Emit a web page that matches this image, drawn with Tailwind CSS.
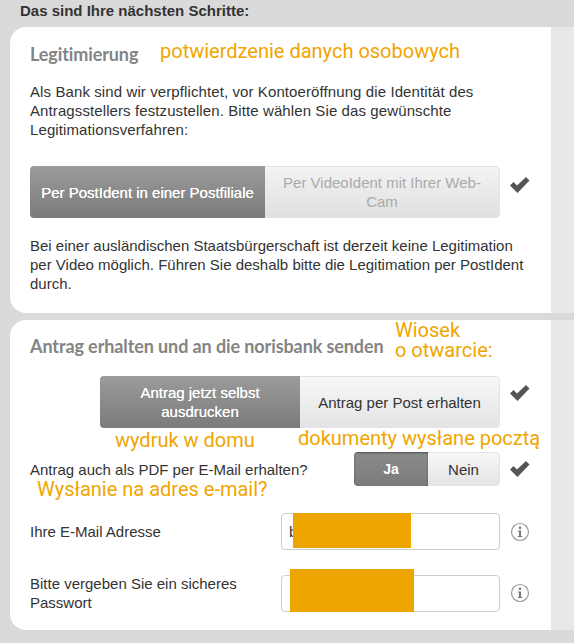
<!DOCTYPE html>
<html lang="de">
<head>
<meta charset="UTF-8">
<title>Das sind Ihre nächsten Schritte</title>
<script src="https://cdn.jsdelivr.net/npm/@tailwindcss/browser@4"></script>
</head>
<body class="bg-[#dadada] font-['Liberation_Sans',Arial,sans-serif] text-[15px] leading-[19px] text-[#333]">
<div class="relative w-[574px] h-[643px] overflow-hidden">
  <h2 class="pl-[20px] pt-[1px] h-[27px] text-[15px] leading-[19px] font-bold text-[#333]">Das sind Ihre nächsten Schritte:</h2>

  <!-- Legitimierung -->
  <section class="flex ml-[10px] h-[286px]">
    <div class="w-[541px] bg-white rounded-l-[16px] pl-[20px] pt-[16px]">
      <h3 class="h-[22px] text-[18px] leading-[22px] tracking-[-0.1px] font-bold font-['Lato',sans-serif] text-[#848484]">Legitimierung</h3>
      <p class="mt-[17px] w-[470px] tracking-[0.1px]">Als Bank sind wir verpflichtet, vor Kontoeröffnung die Identität des Antragsstellers festzustellen. Bitte wählen Sie das gewünschte Legitimationsverfahren:</p>
      <div class="flex items-center mt-[27px]">
        <div class="flex w-[470px] h-[52px] rounded-[4px] overflow-hidden">
          <div class="w-[235px] flex items-center justify-center text-center text-[15px] text-white bg-gradient-to-b from-[#9b9b9b] to-[#7b7b7b] [text-shadow:0_0_0.5px_#fff]">Per PostIdent in einer Postfiliale</div>
          <div class="flex-1 flex items-center justify-center text-center px-[16px] text-[#aaa] bg-gradient-to-b from-[#f3f3f3] to-[#e0e0e0] border border-l-0 border-[#e4e4e4] rounded-r-[4px]">Per VideoIdent mit Ihrer Web-Cam</div>
        </div>
        <svg class="ml-[9px] mb-[14px]" width="22" height="18" viewBox="0 0 22 18"><path d="M1 9.5 L4.5 6 L8 9.5 L17 1 L20.5 4.5 L8.5 17 Z" fill="#555"/></svg>
      </div>
      <p class="mt-[18px] w-[500px]">Bei einer ausländischen Staatsbürgerschaft ist derzeit keine Legitimation per Video möglich. Führen Sie deshalb bitte die Legitimation per PostIdent durch.</p>
    </div>
    <div class="w-[23px] bg-[#e8e8e8]"></div>
  </section>

  <!-- Antrag -->
  <section class="flex ml-[10px] mt-[7px] h-[310px]">
    <div class="w-[541px] bg-white rounded-l-[16px] pl-[20px] pt-[15px]">
      <h3 class="h-[22px] text-[18px] leading-[22px] tracking-[-0.1px] font-bold font-['Lato',sans-serif] text-[#848484]">Antrag erhalten und an die norisbank senden</h3>
      <div class="flex items-center mt-[19px] ml-[70px]">
        <div class="flex w-[400px] h-[52px] rounded-[4px] overflow-hidden">
          <div class="w-[200px] flex items-center justify-center text-center px-[30px] text-[15px] text-white bg-gradient-to-b from-[#9b9b9b] to-[#7b7b7b] [text-shadow:0_0_0.5px_#fff]">Antrag jetzt selbst ausdrucken</div>
          <div class="flex-1 flex items-center justify-center text-center text-[#333] bg-gradient-to-b from-[#f7f7f7] to-[#e4e4e4] border border-l-0 border-[#e4e4e4] rounded-r-[4px]">Antrag per Post erhalten</div>
        </div>
        <svg class="ml-[9px] mb-[18px]" width="22" height="18" viewBox="0 0 22 18"><path d="M1 9.5 L4.5 6 L8 9.5 L17 1 L20.5 4.5 L8.5 17 Z" fill="#555"/></svg>
      </div>
      <div class="flex items-center mt-[24px]">
        <span class="w-[324px]">Antrag auch als PDF per E-Mail erhalten?</span>
        <div class="flex w-[146px] h-[34px] rounded-[4px] overflow-hidden">
          <div class="w-[74px] flex items-center justify-center font-bold text-[14px] text-white bg-gradient-to-b from-[#8b8b8b] to-[#7b7b7b] shadow-[inset_0_1px_2px_rgba(0,0,0,0.45)]">Ja</div>
          <div class="flex-1 flex items-center justify-center text-[#333] bg-gradient-to-b from-[#f7f7f7] to-[#e4e4e4] border border-l-0 border-[#e4e4e4] rounded-r-[4px]">Nein</div>
        </div>
        <svg class="ml-[9px]" width="22" height="18" viewBox="0 0 22 18"><path d="M1 9.5 L4.5 6 L8 9.5 L17 1 L20.5 4.5 L8.5 17 Z" fill="#555"/></svg>
      </div>
      <div class="flex items-center mt-[27px]">
        <span class="w-[251px]">Ihre E-Mail Adresse</span>
        <div class="w-[219px] h-[37px] border border-[#ccc] rounded-[4px] bg-white pl-[7px] leading-[35px]">b</div>
        <svg class="ml-[10px]" width="20" height="20" viewBox="0 0 20 20"><circle cx="10" cy="10" r="8.5" fill="none" stroke="#999" stroke-width="1.2"/><circle cx="10" cy="5.8" r="1.3" fill="#777"/><path d="M8 8.5 H11 V14 H12.2 V15 H7.8 V14 H9 V9.5 H8 Z" fill="#777"/></svg>
      </div>
      <div class="flex items-center mt-[24px]">
        <span class="w-[251px] pr-[20px]">Bitte vergeben Sie ein sicheres Passwort</span>
        <div class="w-[219px] h-[37px] border border-[#ccc] rounded-[4px] bg-white"></div>
        <svg class="ml-[10px]" width="20" height="20" viewBox="0 0 20 20"><circle cx="10" cy="10" r="8.5" fill="none" stroke="#999" stroke-width="1.2"/><circle cx="10" cy="5.8" r="1.3" fill="#777"/><path d="M8 8.5 H11 V14 H12.2 V15 H7.8 V14 H9 V9.5 H8 Z" fill="#777"/></svg>
      </div>
    </div>
    <div class="w-[23px] bg-[#e8e8e8]"></div>
  </section>

  <!-- annotations on top of the screenshot -->
  <div class="font-['Roboto',sans-serif] text-[20px] leading-[20px] text-[#f0a500]">
    <span class="absolute left-[160px] top-[41px]">potwierdzenie danych osobowych</span>
    <span class="absolute left-[395px] top-[320px]">Wiosek<br>o otwarcie:</span>
    <span class="absolute left-[115px] top-[430px]">wydruk w domu</span>
    <span class="absolute left-[298px] top-[428px]">dokumenty wysłane pocztą</span>
    <span class="absolute left-[37px] top-[479px]">Wysłanie na adres e-mail?</span>
  </div>
  <div class="absolute left-[293px] top-[513px] w-[118px] h-[35px] bg-[#efa500]"></div>
  <div class="absolute left-[290px] top-[569px] w-[124px] h-[43px] bg-[#efa500]"></div>
</div>
</body>
</html>
